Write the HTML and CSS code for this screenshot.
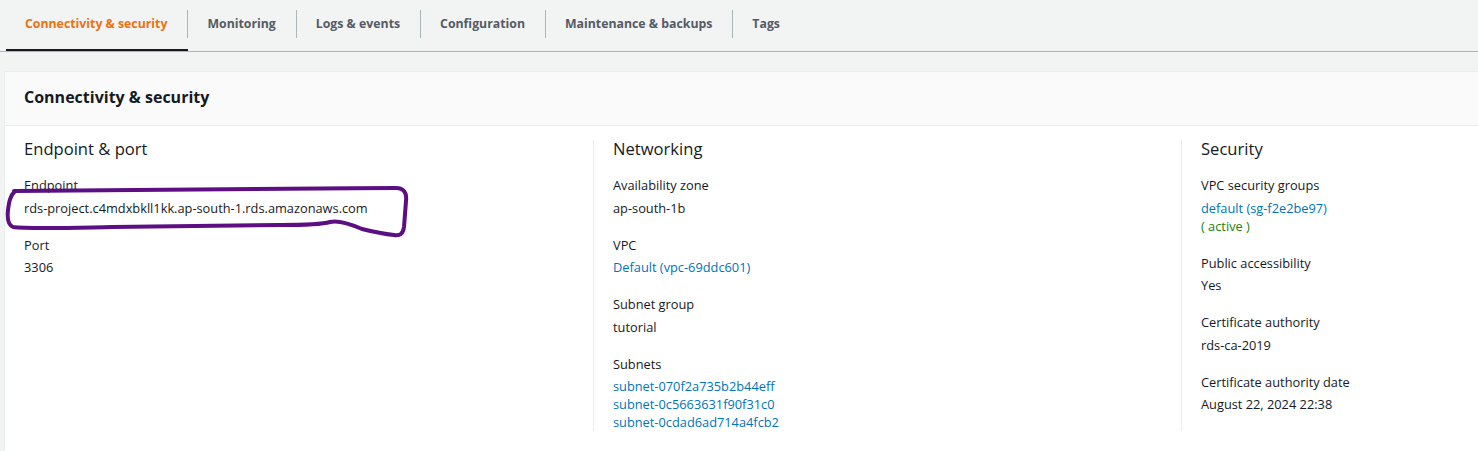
FILE: index.html
```html
<!DOCTYPE html>
<html lang="en">
<head>
<meta charset="utf-8">
<title>Connectivity &amp; security</title>
<link rel="stylesheet" href="styles.css">
</head>
<body>
<div class="page">
  <nav class="tabs">
    <div class="tab active"><span class="tab-label">Connectivity &amp; security</span></div>
    <div class="tab"><span class="tab-label">Monitoring</span></div>
    <div class="tab"><span class="tab-label">Logs &amp; events</span></div>
    <div class="tab"><span class="tab-label">Configuration</span></div>
    <div class="tab"><span class="tab-label">Maintenance &amp; backups</span></div>
    <div class="tab last"><span class="tab-label">Tags</span></div>
  </nav>

  <section class="panel">
    <header class="panel-header"><h2>Connectivity &amp; security</h2></header>
    <div class="panel-body">
      <div class="col">
        <h3>Endpoint &amp; port</h3>
        <div class="field">
          <div class="label">Endpoint</div>
          <div class="value">rds-project.c4mdxbkll1kk.ap-south-1.rds.amazonaws.com</div>
        </div>
        <div class="field">
          <div class="label">Port</div>
          <div class="value">3306</div>
        </div>
      </div>
      <div class="col">
        <h3>Networking</h3>
        <div class="field">
          <div class="label">Availability zone</div>
          <div class="value">ap-south-1b</div>
        </div>
        <div class="field">
          <div class="label">VPC</div>
          <div class="value"><a class="link">Default (vpc-69ddc601)</a></div>
        </div>
        <div class="field">
          <div class="label">Subnet group</div>
          <div class="value">tutorial</div>
        </div>
        <div class="field">
          <div class="label">Subnets</div>
          <div class="value">
            <a class="link block">subnet-070f2a735b2b44eff</a>
            <a class="link block">subnet-0c5663631f90f31c0</a>
            <a class="link block">subnet-0cdad6ad714a4fcb2</a>
          </div>
        </div>
      </div>
      <div class="col">
        <h3>Security</h3>
        <div class="field">
          <div class="label">VPC security groups</div>
          <div class="value">
            <a class="link block">default (sg-f2e2be97)</a>
            <span class="status block">( active )</span>
          </div>
        </div>
        <div class="field">
          <div class="label">Public accessibility</div>
          <div class="value">Yes</div>
        </div>
        <div class="field">
          <div class="label">Certificate authority</div>
          <div class="value">rds-ca-2019</div>
        </div>
        <div class="field">
          <div class="label">Certificate authority date</div>
          <div class="value">August 22, 2024 22:38</div>
        </div>
      </div>
    </div>
  </section>

  <svg class="annotation" width="420" height="250" viewBox="0 0 420 250" aria-hidden="true">
    <path d="M 14 191 C 120 190, 260 189, 396 188 C 404 188, 407 193, 406 201 L 404 227 C 403 234, 400 236, 394 235 C 384 234, 374 232, 362 229 C 348 223, 338 220, 330 222 C 320 225, 300 225, 280 225 L 112 227 C 60 228, 28 229, 13 227 C 8 225, 7 219, 8 210 C 9 202, 10 196, 15 191"
      fill="none" stroke="#5c0f83" stroke-width="4" stroke-linecap="round" stroke-linejoin="round"/>
  </svg>
</div>
</body>
</html>
```

FILE: styles.css
```css
html, body {
  margin: 0;
  padding: 0;
  overflow: hidden;
}

body {
  background: #f2f3f3;
  font-family: "Open Sans", "Noto Sans", "Liberation Sans", sans-serif;
  font-size: 12.8px;
  color: #16191f;
}

.page {
  position: relative;
  width: 1478px;
  height: 451px;
}

/* Tabs */
.tabs {
  display: flex;
  height: 52px;
  padding-left: 6px;
  border-bottom: 1px solid #aab7b8;
  box-sizing: border-box;
}

.tab {
  display: flex;
  align-items: center;
  height: 51px;
  border-bottom: 2px solid transparent;
  box-sizing: border-box;
}

.tab.active {
  border-bottom-color: #16191f;
}

.tab-label {
  display: block;
  height: 28px;
  line-height: 28px;
  padding: 0 20px 0 19px;
  border-right: 1px solid #aab7b8;
  font-weight: 700;
  font-size: 12.3px;
  color: #545b64;
  white-space: nowrap;
  margin-top: -2px;
}

.tab.active .tab-label {
  color: #ec7211;
}

.tab.last .tab-label {
  border-right: none;
}

/* Panel */
.panel {
  margin: 19px 0 0 4px;
  background: #ffffff;
  border: 1px solid #eaeded;
  border-right: none;
}

.panel-header {
  height: 54px;
  display: flex;
  align-items: center;
  padding: 0 19px 3px;
  box-sizing: border-box;
  background: #fafafa;
  border-bottom: 1px solid #eaeded;
}

.panel-header h2 {
  margin: 0;
  font-size: 16px;
  font-weight: 700;
  line-height: 22px;
  color: #16191f;
}

.panel-body {
  display: grid;
  grid-template-columns: 588px 588px 1fr;
  padding: 14px 0 40px;
}

.col {
  padding: 0 19px;
  min-width: 0;
}

.col + .col {
  border-left: 1px solid #eaeded;
}

.col h3 {
  margin: 0 0 18px;
  font-size: 16.6px;
  font-weight: 400;
  line-height: 18px;
  color: #16191f;
}

.field {
  margin-bottom: 19px;
}

.field:last-child {
  margin-bottom: 0;
}

.label {
  line-height: 18px;
  margin-bottom: 4.5px;
  color: #16191f;
}

.value {
  line-height: 18px;
  color: #16191f;
}

.link {
  color: #0073bb;
  text-decoration: none;
}

.block {
  display: block;
}

.status {
  color: #1d8102;
}

/* Hand-drawn annotation overlay */
.annotation {
  position: absolute;
  left: 0;
  top: 0;
  pointer-events: none;
}
```
